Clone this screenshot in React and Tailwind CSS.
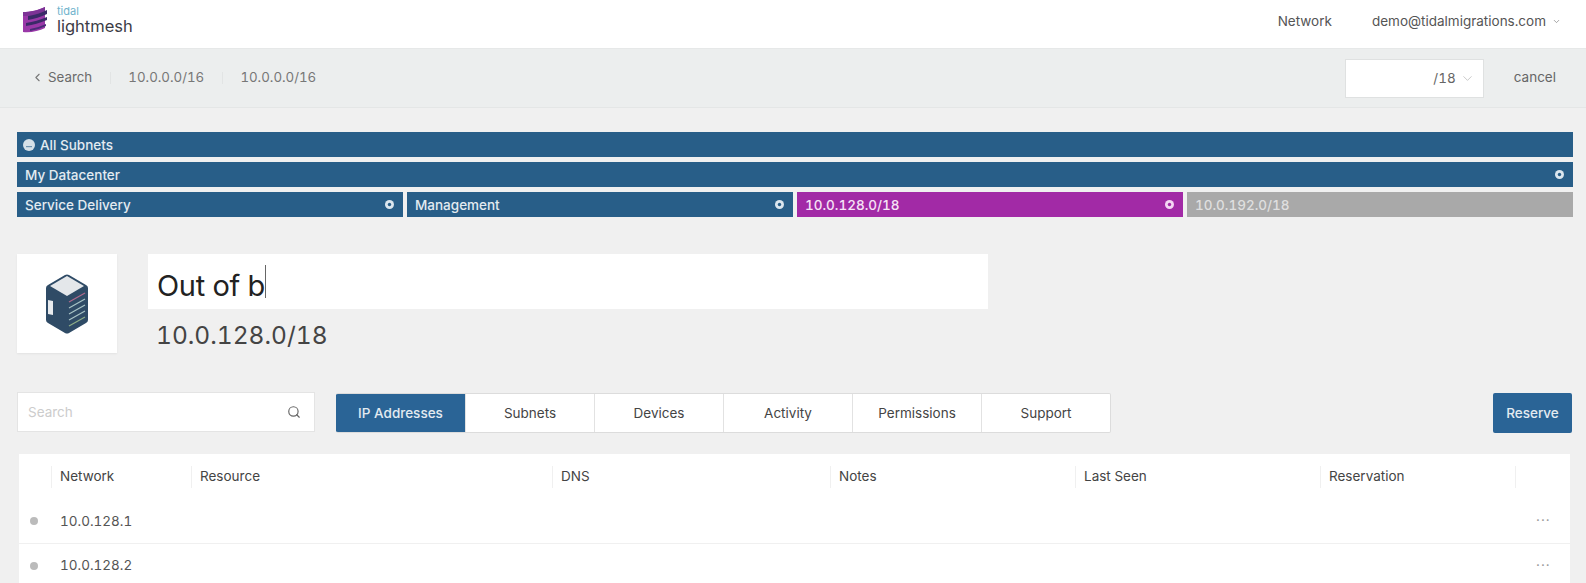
import React from "react";
import { ChevronLeft, ChevronDown, Search } from "lucide-react";

const Close = ({ fill = "#dbe6ee", hole = "#285e88" }) => (
  <svg width="9" height="9" viewBox="0 0 9 9" className="shrink-0">
    <circle cx="4.5" cy="4.5" r="4.5" fill={fill} />
    <circle cx="4.5" cy="4.5" r="1.7" fill={hole} />
  </svg>
);

const Minus = () => (
  <svg width="12" height="12" viewBox="0 0 12 12" className="shrink-0">
    <circle cx="6" cy="6" r="6" fill="#d5e0e8" />
    <path d="M3 7.6 H9" stroke="#6f94b0" strokeWidth="1.2" />
  </svg>
);

const Logo = () => (
  <svg width="26" height="27" viewBox="0 0 26 27" className="shrink-0">
    <path d="M1 6 C8 6 17 4 23 1 V22 C17 25 8 27 1 26 Z" fill="#9a38a8" />
    <path d="M1 6 C8 6 17 4 23 1 V5 C17 8 8 10 1 10 Z" fill="#7d3396" />
    <path d="M6 10 C13 9 19 7 25 4 V8 C19 11 12 13 6 14 Z" fill="#3a2a68" />
    <path d="M4 17 C11 16 18 14 25 11 V14 C18 17 11 19 4 20 Z" fill="#3a2a68" />
    <path d="M8 23 C14 22 19 20 24 18 V20 C19 22 14 24 8 25 Z" fill="#4a2c78" />
  </svg>
);

const ServerIcon = () => (
  <svg width="42" height="60" viewBox="0 0 42 60">
    <path d="M19 1 Q21 0 23 1 L40 11 Q42 12 42 14 V46 Q42 48 40 49 L23 59 Q21 60 19 59 L2 49 Q0 48 0 46 V14 Q0 12 2 11 Z" fill="#2f4b66" />
    <path d="M21 2 L38 12 L21 22 L4 12 Z" fill="#e4e7ea" />
    <path d="M2 26 L7 27 V41 L2 40 Z" fill="#e8ebee" />
    <path d="M23 28 L39 19" stroke="#b06a8c" strokeWidth="1.2" />
    <path d="M23 34 L39 25 M23 40 L39 31 M23 46 L39 37" stroke="#a9c4c6" strokeWidth="1.2" />
    <path d="M23 52 L39 43" stroke="#8fae88" strokeWidth="1.2" />
  </svg>
);

const Tab = ({ children, active }) => (
  <div
    className={
      active
        ? "w-[129px] h-full flex items-center justify-center bg-[#2a6496] text-[#e3ebf1] font-medium"
        : "w-[129px] h-full flex items-center justify-center bg-white text-[#444] border-l border-[#e2e2e2]"
    }
  >
    {children}
  </div>
);

const cols = "grid grid-cols-[32px_140px_361px_278px_245px_245px_195px_55px] items-center";

const Row = ({ ip, border }) => (
  <div className={`${cols} h-11 ${border ? "border-t border-[#f0f0f0]" : ""}`}>
    <div className="pl-[11px]">
      <div className="w-2 h-2 rounded-full bg-[#bbbbbb]" />
    </div>
    <div className="pl-[9px] text-[#555]">{ip}</div>
    <div />
    <div />
    <div />
    <div />
    <div />
    <div className="pl-[21px] text-[#999] tracking-[1px] leading-none">···</div>
  </div>
);

const Head = ({ children, sep = true }) => (
  <div className={`h-[22px] flex items-center pl-2 ${sep ? "border-l border-[#f0f0f0]" : ""}`}>{children}</div>
);

const Crumb = () => <span className="w-px h-3 mx-[17.6px] bg-[#e2e4e4]" />;

export default function App() {
  return (
    <div className="w-[1586px] h-[583px] overflow-hidden bg-[#f0f0f0] text-[13.5px] tabular-nums font-['Inter','Liberation_Sans',sans-serif]">
      <header className="h-12 bg-white flex items-center justify-between pl-[22px] pr-[25px]">
        <div className="flex items-center gap-[9px] -mt-[9px]">
          <Logo />
          <div className="flex flex-col">
            <span className="text-[11px] leading-[12px] text-[#6fb3cc]">tidal</span>
            <span className="text-[16.5px] leading-[18px] text-[#3c3c46]">lightmesh</span>
          </div>
        </div>
        <div className="flex items-center -mt-[5px] text-[#555] text-[13.5px]">
          <span>Network</span>
          <span className="ml-10">demo@tidalmigrations.com</span>
          <ChevronDown size={9} className="ml-[6px] text-[#888]" />
        </div>
      </header>

      <div className="h-[60px] bg-[#eceeee] border-t border-[#e6e8e8] border-b border-b-[#e4e6e6] flex items-center justify-between pl-[31px] pr-[30px] text-[#777]">
        <div className="flex items-center text-[13.3px] -mt-[1px]">
          <ChevronLeft size={13} className="text-[#777]" />
          <span className="ml-[4px] text-[#6a6a6a]">Search</span>
          <Crumb />
          <span>10.0.0.0/16</span>
          <Crumb />
          <span>10.0.0.0/16</span>
        </div>
        <div className="flex items-center">
          <div className="w-[139px] h-[39px] mt-[1px] bg-white border border-[#dfe1e1] flex items-center justify-end pr-[8px] text-[#666]">
            <span>/18</span>
            <ChevronDown size={15} strokeWidth={1} className="ml-[4px] text-[#aaa]" />
          </div>
          <span className="ml-[30px] -mt-[2px] text-[#666]">cancel</span>
        </div>
      </div>

      <div className="pl-[17px] pr-[13px] pt-[24px] flex flex-col gap-[5px]">
        <div className="h-[25px] bg-[#285e88] flex items-center pl-[6px] gap-[5px]">
          <Minus />
          <span className="font-medium pt-px text-[#e3ebf1]">All Subnets</span>
        </div>
        <div className="h-[25px] bg-[#285e88] flex items-center justify-between pl-2 pr-[9px]">
          <span className="font-medium pt-px text-[#e3ebf1]">My Datacenter</span>
          <Close />
        </div>
        <div className="grid grid-cols-4 gap-1 h-[25px]">
          <div className="bg-[#285e88] flex items-center justify-between pl-2 pr-[9px]">
            <span className="font-medium pt-px text-[#e3ebf1]">Service Delivery</span>
            <Close />
          </div>
          <div className="bg-[#285e88] flex items-center justify-between pl-2 pr-[9px]">
            <span className="font-medium pt-px text-[#e3ebf1]">Management</span>
            <Close />
          </div>
          <div className="bg-[#a22aa6] flex items-center justify-between pl-2 pr-[9px]">
            <span className="font-medium pt-px text-[#f6e3f6]">10.0.128.0/18</span>
            <Close fill="#f3d5f3" hole="#a22aa6" />
          </div>
          <div className="bg-[#a9a9a9] flex items-center pl-2">
            <span className="font-medium pt-px text-[#dfdfdf]">10.0.192.0/18</span>
          </div>
        </div>
      </div>

      <div className="flex pl-[17px] pt-[37px]">
        <div className="w-[100px] h-[99px] bg-white shadow-[0_1px_2px_rgba(0,0,0,0.06)] flex items-center justify-center">
          <ServerIcon />
        </div>
        <div className="ml-[31px]">
          <div className="w-[840px] h-[55px] bg-white flex items-center pl-[9px] pt-[8px] text-[29px] tracking-[-0.3px] text-[#222]">
            <span>Out of b</span>
            <span className="w-px h-[33px] -mt-[8px] bg-[#666]" />
          </div>
          <div className="mt-[8px] pl-[8px] text-[24.5px] leading-[36px] text-[#444]">10.0.128.0/18</div>
        </div>
      </div>

      <div className="flex items-start pl-[17px] pr-[14px] pt-[39px]">
        <div className="w-[298px] h-10 bg-white border border-[#e4e4e4] flex items-center justify-between pl-[10px] pr-[13px]">
          <span className="text-[#ccc]">Search</span>
          <Search size={14} className="text-[#666]" />
        </div>
        <div className="ml-[21px] mt-px h-10 flex border border-[#dcdcdc] border-l-0 rounded-[2px] overflow-hidden">
          <Tab active>IP Addresses</Tab>
          <Tab>Subnets</Tab>
          <Tab>Devices</Tab>
          <Tab>Activity</Tab>
          <Tab>Permissions</Tab>
          <Tab>Support</Tab>
        </div>
        <div className="ml-auto mt-px w-[79px] h-10 rounded-[2px] bg-[#2a6496] text-[#e3ebf1] font-medium flex items-center justify-center">
          Reserve
        </div>
      </div>

      <div className="ml-[19px] mt-[21px] w-[1551px] bg-white text-[#444]">
        <div className={`${cols} h-[45px]`}>
          <div />
          <Head>Network</Head>
          <Head>Resource</Head>
          <Head>DNS</Head>
          <Head>Notes</Head>
          <Head>Last Seen</Head>
          <Head>Reservation</Head>
          <Head />
        </div>
        <Row ip="10.0.128.1" />
        <Row ip="10.0.128.2" border />
      </div>
    </div>
  );
}
